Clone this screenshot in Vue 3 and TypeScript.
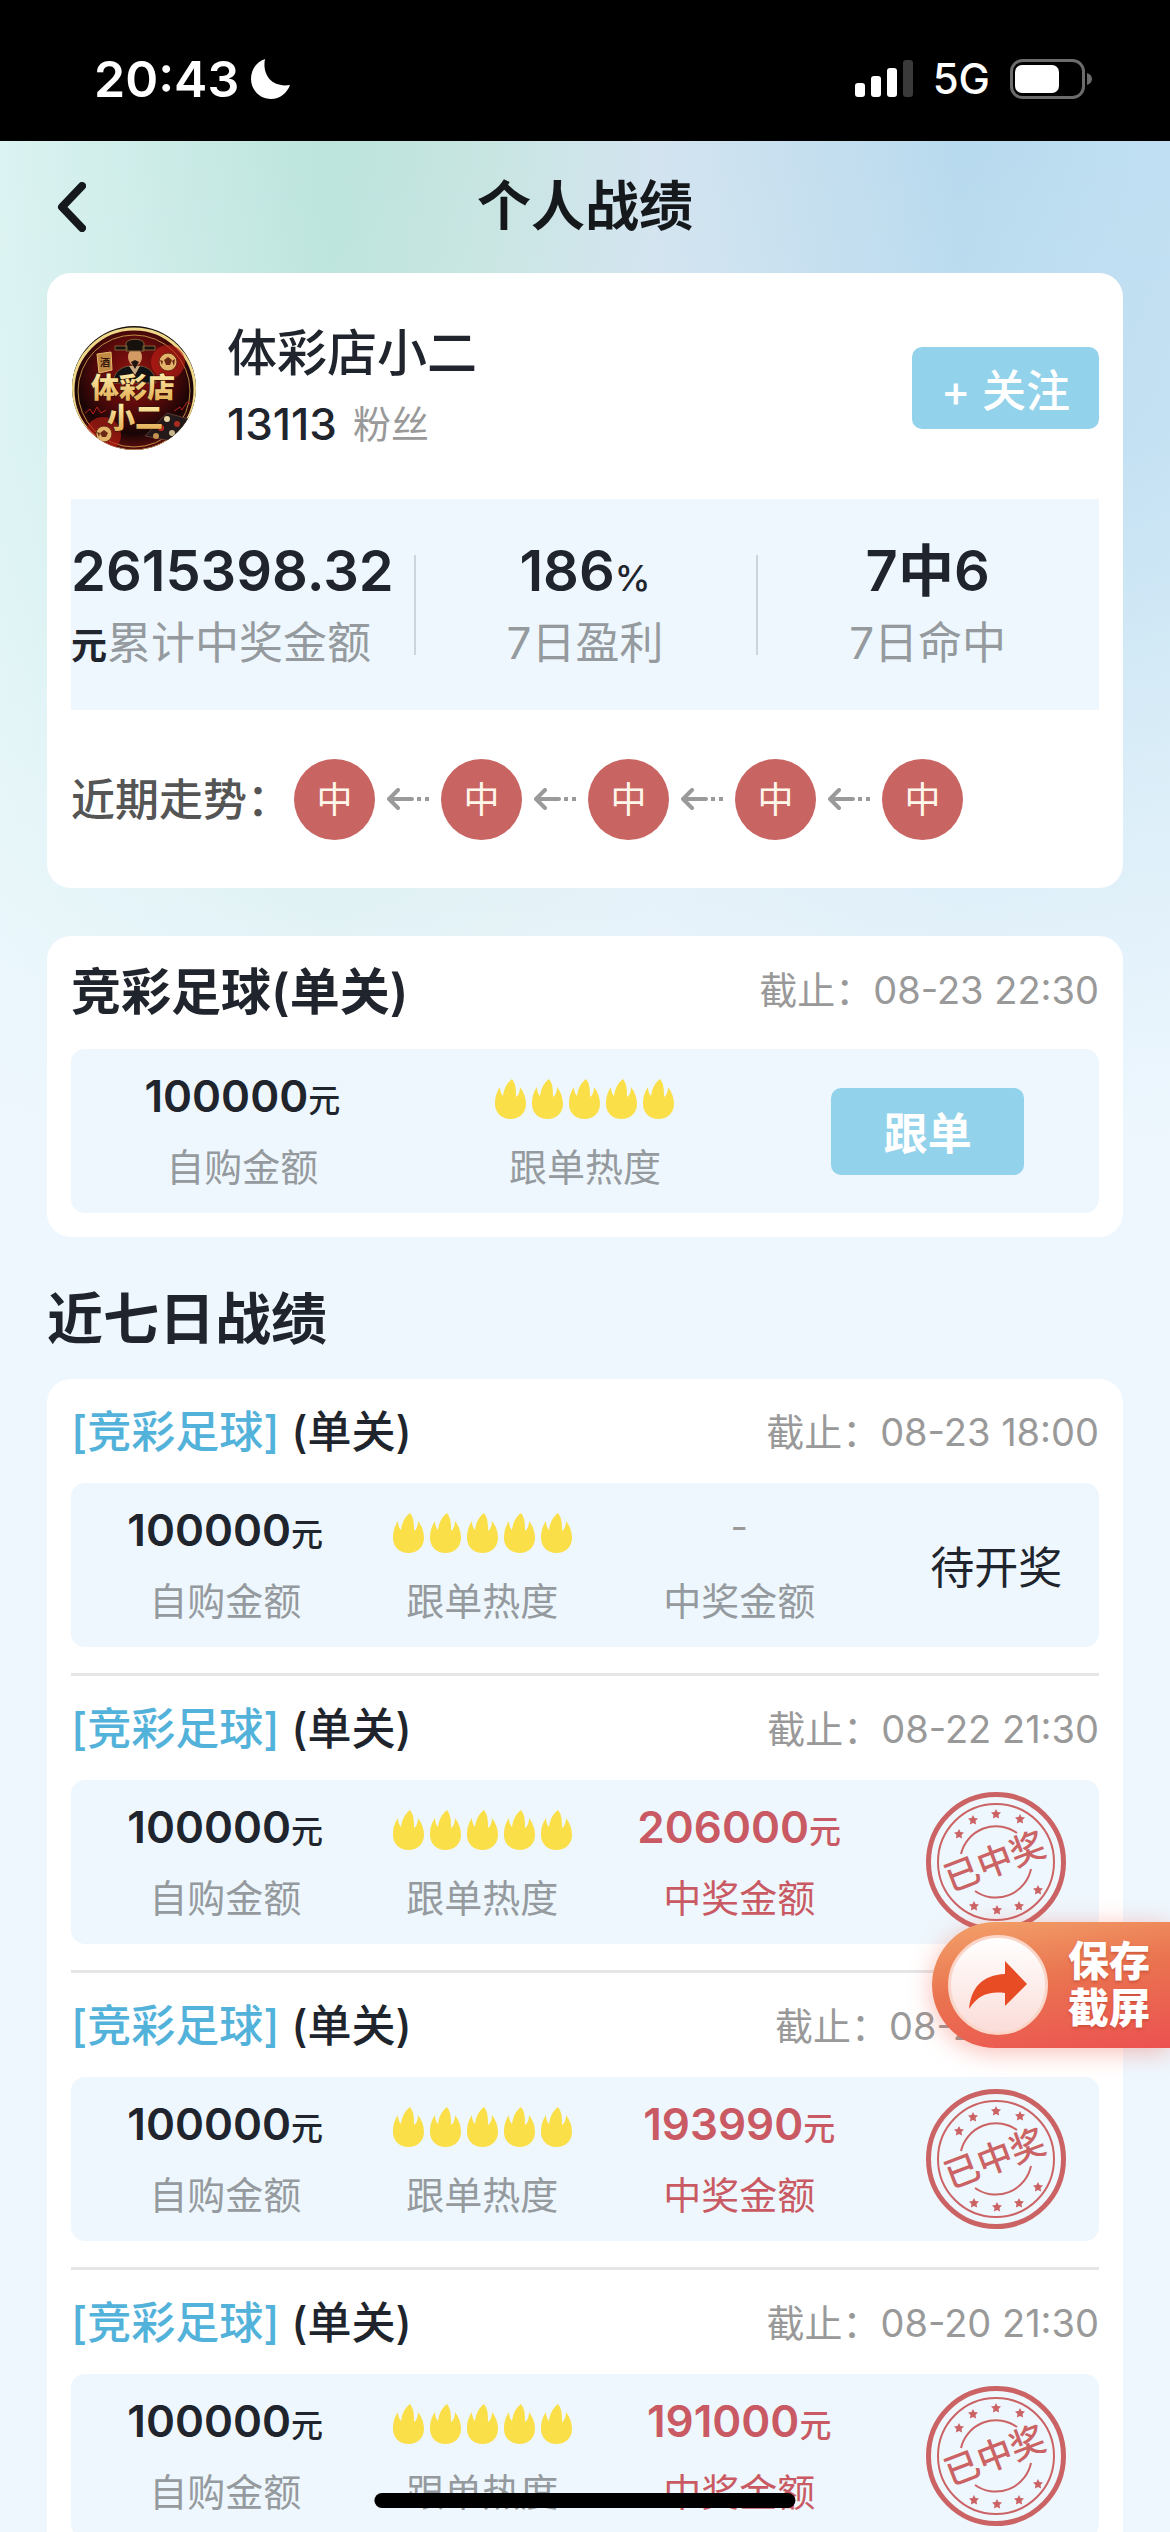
<script setup lang="ts">
interface Stat {
  value: string
  unit?: string
  label: string
  wraps?: boolean
}

interface RecordRow {
  deadline: string
  amount: string
  prize: string | null
}

const stats: Stat[] = [
  { value: '2615398.32', unit: '元', label: '累计中奖金额', wraps: true },
  { value: '186', unit: '%', label: '7日盈利' },
  { value: '7中6', label: '7日命中' },
]

const trend: string[] = ['中', '中', '中', '中', '中']

const records: RecordRow[] = [
  { deadline: '08-23 18:00', amount: '100000', prize: null },
  { deadline: '08-22 21:30', amount: '100000', prize: '206000' },
  { deadline: '08-21 21:30', amount: '100000', prize: '193990' },
  { deadline: '08-20 21:30', amount: '100000', prize: '191000' },
]

const stars: [number, number][] = [
  [33, 42], [47, 28], [70, 22], [94, 27], [112, 98], [93, 114], [71, 118], [48, 114],
]
</script>

<template>
  <div class="screen">
    <svg class="defs" width="0" height="0" aria-hidden="true">
      <symbol id="flame" viewBox="0 0 31 40">
        <path d="M17 0C21 5 21 11 21 18 24 16 25 12 25 8 29 13 31 19 31 25 31 34 24 40 15.500 40S0 34 0 25C0 19 1 14 5 8 5 12 6 15 8 17 9 9 12 4 17 0z" />
      </symbol>
      <symbol id="star" viewBox="-5 -5 10 10">
        <path d="M0-5l1.500 3 3.500.5-2.500 2.500.6 3.600L0 3l-3.100 1.600.6-3.600L-5-1.500l3.500-.5z" />
      </symbol>
    </svg>

    <header class="status">
      <div class="status-left">
        <span class="clock">20:43</span>
        <svg width="40" height="40" viewBox="0 0 40 40" aria-hidden="true">
          <path d="M14 0C11 15 20 29 39 26 36 34 29 40 20 40 9 40 0 31 0 20 0 11 5 3 14 0z" fill="#fff" />
        </svg>
      </div>
      <div class="status-right">
        <svg width="58" height="38" viewBox="0 0 58 38" aria-hidden="true">
          <rect x="0" y="23" width="10" height="14" rx="3" fill="#fff" />
          <rect x="16" y="16" width="10" height="21" rx="3" fill="#fff" />
          <rect x="32" y="8" width="10" height="29" rx="3" fill="#fff" />
          <rect x="48" y="0" width="10" height="37" rx="3" fill="#3a3a3a" />
        </svg>
        <span class="network">5G</span>
        <svg width="82" height="40" viewBox="0 0 82 40" aria-hidden="true">
          <rect x="1.500" y="1.500" width="72" height="37" rx="11" fill="none" stroke="#6c6c6c" stroke-width="3" />
          <rect x="5" y="6" width="44" height="28" rx="7" fill="#fff" />
          <path d="M77 14c3 1 5 3 5 6s-2 5-5 6z" fill="#6c6c6c" />
        </svg>
      </div>
    </header>

    <div class="app">
      <nav class="nav">
        <button class="back" type="button" aria-label="返回">
          <svg width="30" height="50" viewBox="0 0 30 50" aria-hidden="true">
            <path d="M26 4L6 25l20 21" fill="none" stroke="#15191c" stroke-width="8" stroke-linecap="round" stroke-linejoin="round" />
          </svg>
        </button>
        <h1>个人战绩</h1>
      </nav>

      <main class="content">
        <section class="card">
          <div class="profile">
            <svg class="avatar" viewBox="0 0 126 126" aria-hidden="true">
              <defs>
                <radialGradient id="glow" cx="50%" cy="36%" r="62%">
                  <stop offset="0" stop-color="#8e1210" />
                  <stop offset="0.450" stop-color="#5c0a0a" />
                  <stop offset="0.800" stop-color="#180506" />
                  <stop offset="1" stop-color="#5a0d0b" />
                </radialGradient>
                <linearGradient id="gold" x1="0" y1="0" x2="0" y2="1">
                  <stop offset="0" stop-color="#fff0b0" />
                  <stop offset="1" stop-color="#dfa548" />
                </linearGradient>
                <clipPath id="disc"><circle cx="63" cy="63" r="62" /></clipPath>
              </defs>
              <g clip-path="url(#disc)">
                <rect width="126" height="126" fill="#17100c" />
                <circle cx="63" cy="65" r="61" fill="url(#glow)" stroke="#efd88a" stroke-width="3" />
                <circle cx="63" cy="66" r="56" fill="none" stroke="#b98a44" stroke-width="1" />
                <circle cx="97" cy="37" r="17" fill="#c61f16" opacity="0.600" />
                <circle cx="32" cy="110" r="18" fill="#c61f16" opacity="0.600" />
                <path d="M42 58c1-12 9-16 16-17h12c7 1 14 6 15 17z" fill="#121314" stroke="#6d5638" />
                <path d="M58 41l6 9 5-9z" fill="#c9ab82" />
                <ellipse cx="64" cy="32" rx="7" ry="9" fill="#d49a64" />
                <path d="M60 37l4 7 4-7-4-2z" fill="#201511" />
                <path d="M55 26v-8c2-5 16-5 18 0v8zM44 21h12v4H44zM72 21h12v4H72z" fill="#17110e" stroke="#806039" />
                <path d="M26 29l14-2 1 18-13 3z" fill="#c08a45" stroke="#e9bc6c" />
                <text x="29" y="41" font-size="10" font-weight="700" fill="#32160c">酒</text>
                <g fill="#e2b56b" stroke="#6b2915">
                  <circle cx="97" cy="37" r="9" /><circle cx="33" cy="109" r="8" />
                </g>
                <g fill="#6b2915">
                  <path d="M97 32l4 3-2 5h-4l-2-5zM89 35l3 1-1 4zM104 34l-3 2 2 5zM33 105l4 3-2 4h-4l-2-4zM26 107l3 1-1 4z" />
                </g>
                <path d="M14 88l5-4 3 5 4-7 4 6 5-3M103 86l6-4 2 3 5-8 4 2" fill="none" stroke="#b8221a" />
                <path d="M96 88l22 6-12 23-32-6z" fill="#24191a" stroke="#5e3b31" />
                <g>
                  <circle cx="96" cy="94" r="3" fill="#e7d3a1" /><circle cx="106" cy="99" r="3" fill="#a82c20" />
                  <circle cx="90" cy="103" r="3" fill="#d32a1e" /><circle cx="101" cy="108" r="3" fill="#c8b78e" />
                  <circle cx="85" cy="111" r="3" fill="#c59052" />
                </g>
                <g fill="url(#gold)" stroke="#2b1005" stroke-width="1" paint-order="stroke" font-weight="900" text-anchor="middle">
                  <text x="62" y="73" font-size="28">体彩店</text>
                  <text x="64" y="103" font-size="28">小二</text>
                </g>
              </g>
            </svg>
            <div class="who">
              <h2>体彩店小二</h2>
              <p><strong>13113</strong><span>粉丝</span></p>
            </div>
            <button class="follow" type="button">+ 关注</button>
          </div>

          <div class="stats">
            <div v-for="stat in stats" :key="stat.label" class="stat">
              <template v-if="stat.wraps">
                <div class="stat-value start">{{ stat.value }}</div>
                <div class="stat-label start"><b>{{ stat.unit }}</b>{{ stat.label }}</div>
              </template>
              <template v-else>
                <div class="stat-value">{{ stat.value }}<small v-if="stat.unit">{{ stat.unit }}</small></div>
                <div class="stat-label">{{ stat.label }}</div>
              </template>
            </div>
          </div>

          <div class="trend">
            <span class="trend-label">近期走势：</span>
            <template v-for="(result, i) in trend" :key="i">
              <svg v-if="i > 0" class="arrow" viewBox="0 0 42 22" aria-hidden="true">
                <path d="M11 2L2 11l9 9M2 11h23" fill="none" stroke="#9a9a9a" stroke-width="4" stroke-linecap="round" stroke-linejoin="round" />
                <path d="M30 11h4M38 11h4" stroke="#9a9a9a" stroke-width="4" />
              </svg>
              <span class="ball">{{ result }}</span>
            </template>
          </div>
        </section>

        <section class="card current">
          <div class="current-head">
            <h2>竞彩足球(单关)</h2>
            <span class="deadline">截止：08-23 22:30</span>
          </div>
          <div class="panel thirds">
            <div class="cell">
              <div class="amount">100000<small>元</small></div>
              <div class="label">自购金额</div>
            </div>
            <div class="cell">
              <div class="flames"><svg v-for="n in 5" :key="n" viewBox="0 0 31 40"><use href="#flame" /></svg></div>
              <div class="label">跟单热度</div>
            </div>
            <div class="cell"><button class="copy" type="button">跟单</button></div>
          </div>
        </section>

        <h2 class="section-title">近七日战绩</h2>

        <section class="card">
          <article v-for="row in records" :key="row.deadline" class="record">
            <div class="record-head">
              <h3><em>[竞彩足球]</em> (单关)</h3>
              <span class="deadline">截止：{{ row.deadline }}</span>
            </div>
            <div class="panel quarters">
              <div class="cell">
                <div class="amount">{{ row.amount }}<small>元</small></div>
                <div class="label">自购金额</div>
              </div>
              <div class="cell">
                <div class="flames"><svg v-for="n in 5" :key="n" viewBox="0 0 31 40"><use href="#flame" /></svg></div>
                <div class="label">跟单热度</div>
              </div>
              <div class="cell" :class="{ won: row.prize }">
                <div v-if="row.prize" class="amount">{{ row.prize }}<small>元</small></div>
                <div v-else class="amount none">-</div>
                <div class="label">中奖金额</div>
              </div>
              <div class="cell">
                <svg v-if="row.prize" class="stamp" viewBox="0 0 140 140">
                  <g fill="none" stroke="#cb6365">
                    <circle cx="70" cy="70" r="67.500" stroke-width="5" />
                    <circle cx="70" cy="70" r="58" stroke-width="2" />
                    <path d="M35 62A36 36 0 0 1 91 41M49 99A36 36 0 0 0 105 77" stroke-width="2" />
                  </g>
                  <use v-for="([x, y], i) in stars" :key="i" href="#star" :x="x - 5" :y="y - 5" width="10" height="10" fill="#cb6365" />
                  <text x="69" y="82" transform="rotate(-21 69 70)" text-anchor="middle" font-size="35" font-weight="500" fill="#cb6365">已中奖</text>
                </svg>
                <span v-else class="pending">待开奖</span>
              </div>
            </div>
          </article>
        </section>
      </main>
    </div>

    <button class="save" type="button">
      <span class="save-icon">
        <svg width="58" height="48" viewBox="0 0 58 48" aria-hidden="true">
          <path d="M36 0l22 23-22 22V32C20 30 9 34 0 48 2 27 13 14 36 13z" fill="#e84c25" />
        </svg>
      </span>
      <span class="save-text">保存<br />截屏</span>
    </button>
    <div class="home-bar"></div>
  </div>
</template>

<style>
body {
  margin: 0;
}
</style>

<style scoped>
.screen {
  position: relative;
  display: flex;
  flex-direction: column;
  height: 100vh;
  overflow: hidden;
  color: #20252d;
  font-family: Inter, "Noto Sans CJK SC", sans-serif;
}
.screen *,
.screen *::before {
  box-sizing: border-box;
}
.defs {
  position: absolute;
}
h1,
h2,
h3,
p {
  margin: 0;
  font-weight: 500;
}
svg {
  display: block;
  flex: none;
}
button {
  border: 0;
  padding: 0;
  font-family: inherit;
  cursor: pointer;
}

.status {
  flex: none;
  display: flex;
  justify-content: space-between;
  align-items: center;
  height: 141px;
  padding: 16px 78px 0 94px;
  background: #000;
  color: #fff;
}
.status-left,
.status-right {
  display: flex;
  align-items: center;
}
.status-left {
  gap: 12px;
}
.status-right {
  gap: 20px;
}
.clock {
  font-size: 50px;
  font-weight: 600;
}
.network {
  font-size: 42px;
  font-weight: 500;
}

.app {
  flex: 1;
  min-height: 0;
  display: flex;
  flex-direction: column;
  background:
    linear-gradient(180deg, rgba(238, 247, 254, 0) 0, rgba(238, 247, 254, 0.1) 300px, rgba(236, 247, 252, 0.6) 620px, #eef7fe 1000px),
    linear-gradient(90deg, #dbf3f2 0%, #bce4dd 28%, #c8e5e2 42%, #d3e4f0 56%, #b8daee 82%, #c0dff2 100%);
}
.nav {
  position: relative;
  flex: none;
  display: flex;
  justify-content: center;
  align-items: center;
  height: 132px;
}
.nav h1 {
  font-size: 54px;
  font-weight: 600;
  line-height: 80px;
  color: #15191c;
}
.back {
  position: absolute;
  left: 56px;
  background: none;
}
.content {
  flex: 1;
  min-height: 0;
  padding: 0 47px 80px;
  overflow-y: auto;
  scrollbar-width: none;
}
.card {
  padding: 0 24px;
  border-radius: 24px;
  background: #fff;
}

.profile {
  display: flex;
  align-items: center;
  height: 226px;
  padding-top: 4px;
}
.avatar {
  width: 126px;
  height: 126px;
}
.who {
  flex: 1;
  margin-left: 30px;
}
.who h2 {
  font-size: 50px;
  line-height: 72px;
}
.who p {
  display: flex;
  align-items: center;
  gap: 16px;
  line-height: 70px;
}
.who strong {
  font-size: 44px;
  font-weight: 500;
}
.who span {
  font-size: 38px;
  font-weight: 400;
  color: #999;
}
.follow,
.copy {
  border-radius: 10px;
  background: #92d2ea;
  color: #fff;
  font-size: 44px;
  font-weight: 500;
}
.follow {
  width: 187px;
  height: 82px;
}
.copy {
  width: 193px;
  height: 87px;
  font-weight: 700;
}

.stats {
  display: grid;
  grid-template-columns: repeat(3, 1fr);
  height: 211px;
  background: #eef7fd;
}
.stat {
  position: relative;
  display: flex;
  flex-direction: column;
  justify-content: center;
  min-width: 0;
  padding-top: 4px;
  text-align: center;
  white-space: nowrap;
}
.stat + .stat::before {
  content: "";
  position: absolute;
  left: 0;
  top: 56px;
  width: 2px;
  height: 100px;
  background: #ccd5da;
}
.stat-value {
  height: 72px;
  font-size: 56px;
  font-weight: 600;
  line-height: 72px;
}
.stat-value small {
  font-size: 36px;
  font-weight: 500;
  line-height: 36px;
}
.stat-label {
  height: 72px;
  font-size: 44px;
  line-height: 72px;
  color: #959a9e;
}
.start {
  text-align: left;
}
.stat-label b {
  font-size: 36px;
  font-weight: 600;
  line-height: 36px;
  color: #20252d;
}

.trend {
  display: flex;
  align-items: center;
  height: 178px;
}
.trend-label {
  width: 223px;
  padding-bottom: 4px;
  font-size: 44px;
  font-weight: 500;
  color: #555;
  white-space: nowrap;
}
.ball {
  display: flex;
  flex: none;
  justify-content: center;
  align-items: center;
  width: 81px;
  height: 81px;
  padding-bottom: 4px;
  border-radius: 50%;
  background: #c86462;
  color: #fff6ea;
  font-size: 36px;
}
.arrow {
  width: 42px;
  height: 22px;
  margin: 0 12px;
}

.current {
  margin-top: 48px;
  padding-bottom: 24px;
}
.current-head,
.record-head {
  display: flex;
  justify-content: space-between;
  align-items: center;
}
.current-head {
  height: 113px;
  padding-bottom: 10px;
}
.current-head h2 {
  font-size: 50px;
  font-weight: 600;
}
.deadline {
  font-size: 38px;
  color: #999;
}
.panel {
  display: grid;
  align-items: center;
  height: 164px;
  border-radius: 14px;
  background: #eef7fd;
}
.thirds {
  grid-template-columns: repeat(3, 1fr);
}
.quarters {
  grid-template-columns: 30% 20% 30% 20%;
}
.cell {
  display: flex;
  flex-direction: column;
  align-items: center;
  white-space: nowrap;
}
.amount {
  height: 72px;
  font-size: 44px;
  font-weight: 600;
  line-height: 72px;
}
.amount small {
  font-size: 32px;
  font-weight: 500;
  line-height: 32px;
}
.amount.none {
  color: #999;
  font-size: 38px;
  font-weight: 400;
  line-height: 64px;
}
.flames {
  display: flex;
  align-items: center;
  gap: 6px;
  height: 72px;
  padding-top: 6px;
}
.flames svg {
  width: 31px;
  height: 40px;
  fill: #fadf49;
}
.label {
  font-size: 38px;
  line-height: 70px;
  color: #959a9e;
}
.won,
.won .label {
  color: #c95a63;
}
.pending {
  font-size: 44px;
}
.stamp {
  width: 140px;
  height: 140px;
}

.section-title {
  padding: 42px 0 20px;
  font-size: 56px;
  font-weight: 600;
  line-height: 80px;
}
.record {
  padding-bottom: 26px;
}
.record + .record {
  border-top: 3px solid #e4e6e8;
}
.record-head {
  height: 104px;
  padding-bottom: 4px;
}
.record-head h3 {
  font-size: 44px;
}
.record-head em {
  font-style: normal;
  color: #53b2da;
}

.save {
  position: absolute;
  right: 0;
  bottom: 484px;
  display: flex;
  align-items: center;
  gap: 20px;
  width: 238px;
  height: 126px;
  padding-left: 16px;
  border-radius: 63px 0 0 63px;
  background: linear-gradient(170deg, #f3a36b 0%, #ea7450 45%, #ec5151 100%);
  box-shadow: 0 4px 24px rgba(240, 90, 70, 0.4);
}
.save-icon {
  display: flex;
  justify-content: center;
  align-items: center;
  width: 100px;
  height: 100px;
  border-radius: 50%;
  background: linear-gradient(180deg, #fff 0%, #fbdcd8 100%);
  border: 3px solid #fad5c8;
}
.save-text {
  color: #fff;
  font-size: 41px;
  font-weight: 900;
  line-height: 47px;
  text-shadow: 0 2px 3px rgba(180, 60, 40, 0.5);
}
.home-bar {
  position: absolute;
  left: 50%;
  bottom: 24px;
  width: 36%;
  height: 15px;
  border-radius: 8px;
  background: #000;
  transform: translateX(-50%);
}
</style>
